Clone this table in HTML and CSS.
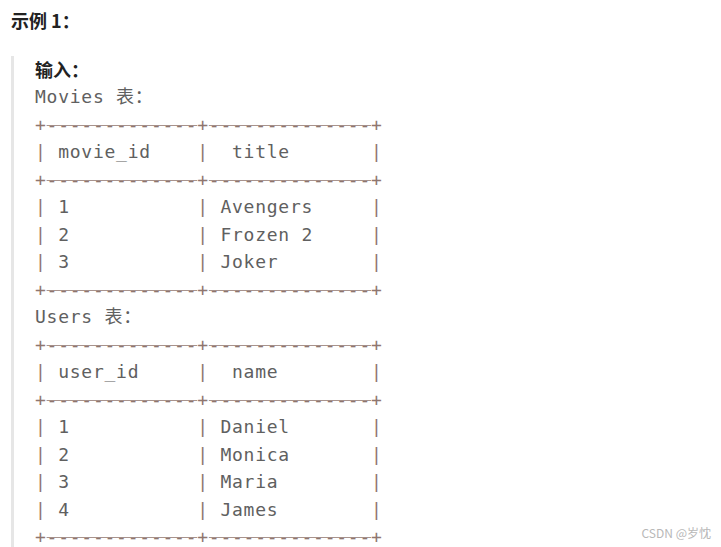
FILE: index.html
```html
<!DOCTYPE html>
<html lang="zh-CN">
<head>
<meta charset="utf-8">
<title>示例 1</title>
<link rel="stylesheet" href="styles.css">
</head>
<body>
<div class="page">
  <p class="heading">示例 1：</p>
  <blockquote class="quote">
    <div class="label">输入：</div>
<pre class="code">Movies 表：
<span class="b">+<span class="d">-------------</span>+<span class="d">--------------</span>+</span>
<span class="b">|</span> movie_id    <span class="b">|</span>  title       <span class="b">|</span>
<span class="b">+<span class="d">-------------</span>+<span class="d">--------------</span>+</span>
<span class="b">|</span> 1           <span class="b">|</span> Avengers     <span class="b">|</span>
<span class="b">|</span> 2           <span class="b">|</span> Frozen 2     <span class="b">|</span>
<span class="b">|</span> 3           <span class="b">|</span> Joker        <span class="b">|</span>
<span class="b">+<span class="d">-------------</span>+<span class="d">--------------</span>+</span>
Users 表：
<span class="b">+<span class="d">-------------</span>+<span class="d">--------------</span>+</span>
<span class="b">|</span> user_id     <span class="b">|</span>  name        <span class="b">|</span>
<span class="b">+<span class="d">-------------</span>+<span class="d">--------------</span>+</span>
<span class="b">|</span> 1           <span class="b">|</span> Daniel       <span class="b">|</span>
<span class="b">|</span> 2           <span class="b">|</span> Monica       <span class="b">|</span>
<span class="b">|</span> 3           <span class="b">|</span> Maria        <span class="b">|</span>
<span class="b">|</span> 4           <span class="b">|</span> James        <span class="b">|</span>
<span class="b">+<span class="d">-------------</span>+<span class="d">--------------</span>+</span></pre>
  </blockquote>
  <div class="watermark">CSDN @岁忱</div>
</div>
</body>
</html>
```
FILE: styles.css
```css
html, body {
  margin: 0;
  padding: 0;
  background: #ffffff;
}
.page {
  position: relative;
  width: 721px;
  height: 547px;
  overflow: hidden;
  font-family: "Noto Sans CJK SC", "Noto Sans", sans-serif;
}
.heading {
  margin: 0;
  padding: 6px 0 0 11px;
  font-size: 18px;
  line-height: 28px;
  font-weight: 700;
  color: #222;
}
.quote {
  margin: 22px 0 0 11px;
  padding: 0 0 0 21px;
  border-left: 3px solid #e6e6e6;
}
.label {
  font-size: 18px;
  line-height: 26px;
  font-weight: 700;
  color: #222;
}
.code {
  margin: 1px 0 0 0;
  font-family: "DejaVu Sans Mono", "Noto Sans CJK SC", monospace;
  font-size: 18px;
  letter-spacing: 0.75px;
  line-height: 27.5px;
  color: #606060;
}
.b {
  color: #8f766f;
}
.d {
  text-decoration-line: underline;
  text-decoration-thickness: 1px;
  text-underline-offset: -6px;
  text-decoration-color: #a8938d;
  text-decoration-skip-ink: none;
}
.watermark {
  position: absolute;
  right: 10px;
  bottom: 6px;
  font-size: 12px;
  color: #b8b8b8;
  line-height: 16px;
}
```
